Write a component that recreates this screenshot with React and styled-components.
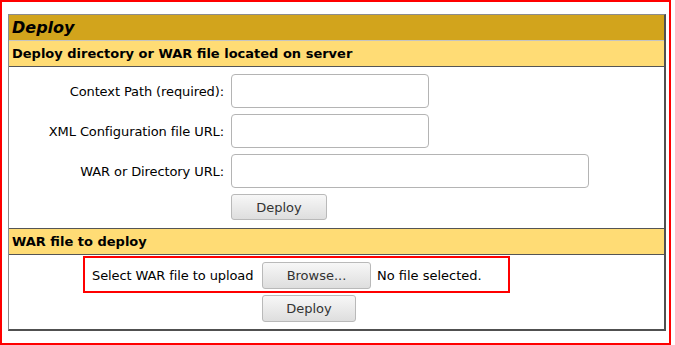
import React from 'react';
import styled, { createGlobalStyle } from 'styled-components';

const Global = createGlobalStyle`
  html, body { margin: 0; padding: 0; background: #fff; }
  body {
    font-family: "DejaVu Sans", Verdana, sans-serif;
    font-size: 13px;
    color: #000;
  }
`;

const Frame = styled.div`
  box-sizing: border-box;
  width: 671px;
  height: 345px;
  border: 2px solid #ff0000;
  padding: 12px 0 0 6px;
`;

const Panel = styled.div`
  box-sizing: border-box;
  width: 658px;
  border-style: solid;
  border-width: 1px 2px 2px 1px;
  border-color: #8c8c8c #505050 #505050 #8c8c8c;
`;

const TitleRow = styled.div`
  box-sizing: border-box;
  height: 26px;
  display: flex;
  align-items: center;
  padding: 0 3px;
  background: #d2a41c;
  border-bottom: 1px solid #c4c4c4;
  font-size: 16px;
  font-weight: bold;
  font-style: italic;
`;

const HeaderRow = styled.div`
  box-sizing: border-box;
  height: ${(p) => (p.$first ? 26 : 27)}px;
  display: flex;
  align-items: center;
  padding: 0 3px;
  background: #ffdc75;
  border-top: ${(p) => (p.$first ? 'none' : '1px solid #555')};
  border-bottom: 1px solid #555;
  font-size: 13px;
  font-weight: bold;
`;

const FormGrid = styled.div`
  display: grid;
  grid-template-columns: 215px auto;
  column-gap: 7px;
  row-gap: 6px;
  align-items: center;
  justify-content: start;
  padding: 7px 0 8px 0;
`;

const Label = styled.label`
  text-align: right;
  white-space: nowrap;
  letter-spacing: -0.1px;
`;

const TextInput = styled.input`
  box-sizing: border-box;
  width: ${(p) => p.$w}px;
  height: 34px;
  border: 1px solid #b4b4b4;
  border-radius: 4px;
  background: #fff;
  padding: 0 6px;
  font: inherit;
`;

const Button = styled.button`
  box-sizing: border-box;
  width: ${(p) => p.$w}px;
  height: ${(p) => p.$h || 26}px;
  border: 1px solid #b9b9b9;
  border-radius: 3px;
  background: linear-gradient(#f7f7f7, #dedede);
  font-family: "DejaVu Sans", Verdana, sans-serif;
  font-size: 13px;
  color: #333;
  padding: 0;
`;

const Slot = styled.div`
  grid-column: ${(p) => p.$col || 'auto'};
`;

const UploadSection = styled.div`
  padding: 1px 0 7px 0;
`;

const HighlightRow = styled.div`
  box-sizing: border-box;
  width: 427px;
  height: 37px;
  margin-left: 74px;
  border: 2px solid #ff0000;
  display: flex;
  align-items: center;
  padding: 2px 0 0 7px;
`;

const UploadLabel = styled.span`
  width: 170px;
  white-space: nowrap;
  letter-spacing: -0.1px;
`;

const FileText = styled.span`
  margin-left: 6px;
  white-space: nowrap;
`;

const ButtonRow = styled.div`
  padding-left: ${(p) => p.$indent}px;
  padding-top: 2px;
`;

export default function App() {
  return (
    <>
      <Global />
      <Frame>
        <Panel>
          <TitleRow>Deploy</TitleRow>
          <HeaderRow $first>Deploy directory or WAR file located on server</HeaderRow>
          <FormGrid>
            <Label>Context Path (required):</Label>
            <TextInput $w={198} />
            <Label>XML Configuration file URL:</Label>
            <TextInput $w={198} />
            <Label>WAR or Directory URL:</Label>
            <TextInput $w={358} />
            <Slot $col="2">
              <Button $w={96}>Deploy</Button>
            </Slot>
          </FormGrid>
          <HeaderRow>WAR file to deploy</HeaderRow>
          <UploadSection>
            <HighlightRow>
              <UploadLabel>Select WAR file to upload</UploadLabel>
              <Button $w={109} $h={27}>Browse...</Button>
              <FileText>No file selected.</FileText>
            </HighlightRow>
            <ButtonRow $indent={253}>
              <Button $w={94} $h={27}>Deploy</Button>
            </ButtonRow>
          </UploadSection>
        </Panel>
      </Frame>
    </>
  );
}
